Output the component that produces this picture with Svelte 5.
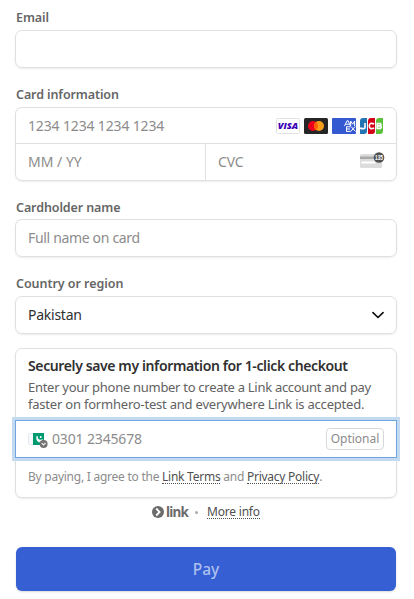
<script>
  const country = 'Pakistan';
</script>

<main>
  <section class="field">
    <div class="label"><span>Email</span></div>
    <div class="box"></div>
  </section>

  <section class="field card-field">
    <div class="label"><span>Card information</span></div>
    <div class="card">
      <div class="row number">
        <span class="ph digits">1234 1234 1234 1234</span>
        <div class="brands">
          <svg width="24" height="16" viewBox="0 0 24 16">
            <rect x=".5" y=".5" width="23" height="15" rx="1" fill="#fff" stroke="#e2e2e2" />
            <text x="1.7" y="11.3" textLength="20.5" lengthAdjust="spacingAndGlyphs" font-family="Open Sans, sans-serif" font-size="9.5" font-weight="800" font-style="italic" fill="#3a00b8">VISA</text>
          </svg>
          <svg width="24" height="16" viewBox="0 0 24 16">
            <rect width="24" height="16" rx="1.5" fill="#252525" />
            <circle cx="9" cy="8" r="5" fill="#eb001b" />
            <circle cx="15" cy="8" r="5" fill="#f79e1b" />
            <path d="M12 4a5 5 0 0 1 0 8a5 5 0 0 1 0-8z" fill="#ff5f00" />
          </svg>
          <svg width="24" height="16" viewBox="0 0 24 16">
            <rect width="24" height="16" rx="1" fill="#3559d1" />
            <g fill="none" stroke="#fff" stroke-width="1">
              <path d="M12.5 8 15 2.8h1.2L18.4 8M13.8 6.2h3.4M18.6 8V3l2 3.2L22.6 3v5M14.5 8.6v5M14.5 8.8h4M14.5 11h3.5M14.5 13.4h4.3l4.4-5M19 8.5l4.5 5" />
            </g>
          </svg>
          <svg width="24" height="16" viewBox="0 0 24 16">
            <path d="M3 0h4v13a3 3 0 0 1-3 3H0V3a3 3 0 0 1 3-3z" fill="#2374b3" />
            <path d="M11 0h4v13a3 3 0 0 1-3 3H8V3a3 3 0 0 1 3-3z" fill="#d50017" />
            <path d="M19 0h4v13a3 3 0 0 1-3 3h-4V3a3 3 0 0 1 3-3z" fill="#5bc13b" />
            <g fill="none" stroke="#fff" stroke-width="1.6">
              <path d="M5 5v4.2Q5 10.6 3 10.6T0 10M14.2 6Q9.3 4.2 9.3 8t4.9 2M16.5 5.6h3.8q1.5 1.1 0 2.3h-3.8 4q1.6 1.3 0 2.5h-4M17.2 5v5.8" />
            </g>
          </svg>
        </div>
      </div>
      <div class="row split">
        <div class="half expiry"><span class="ph mm">MM / YY</span></div>
        <div class="half cvc">
          <span class="ph">CVC</span>
          <svg class="cvc-icon" width="25" height="18" viewBox="0 0 25 18">
            <rect y="3" width="22" height="14" rx="1.5" fill="#dcdcdc" />
            <rect y="5.5" width="22" height="2.5" fill="#a9a9a9" />
            <rect x="1.5" y="10.5" width="14" height="2" fill="#fff" />
            <circle cx="19" cy="6.5" r="5.3" fill="#515151" />
            <text x="15" y="9" textLength="8" lengthAdjust="spacingAndGlyphs" font-family="Liberation Sans, sans-serif" font-size="6.8" font-weight="700" fill="#fff">135</text>
          </svg>
        </div>
      </div>
    </div>
  </section>

  <section class="field name-field">
    <div class="label"><span>Cardholder name</span></div>
    <div class="box"><span class="ph name">Full name on card</span></div>
  </section>

  <section class="field country-field">
    <div class="label"><span class="l4">Country or region</span></div>
    <div class="box select">
      <span class="value">{country}</span>
      <svg width="12" height="12" viewBox="0 0 12 12"><path d="M1 3.7 6 8.5l5-4.8" fill="none" stroke="#111" stroke-width="1.7" stroke-linecap="round" stroke-linejoin="round" /></svg>
    </div>
  </section>

  <section class="save">
    <div class="intro">
      <h2><span>Securely save my information for 1-click checkout</span></h2>
      <p><span class="p1">Enter your phone number to create a Link account and pay</span></p>
      <p><span class="p2">faster on formhero-test and everywhere Link is accepted.</span></p>
    </div>
    <div class="phone">
      <svg class="flag" width="20" height="17" viewBox="0 0 20 17">
        <rect x=".5" y="1.5" width="8" height="11" rx="1" fill="#f6f8fb" stroke="#e4e9f0" />
        <rect x="5" y="1" width="11" height="12" fill="#009a70" />
        <path d="M9.1 4.3C7.6 9.8 12 11.6 14.4 7.7C11.5 9.1 9.3 7.3 9.1 4.3z" fill="#fff" stroke="#fff" />
        <circle cx="12.7" cy="4.9" r="1" fill="#fff" />
        <circle cx="15.6" cy="12" r="4" fill="#737373" />
        <path d="m13.7 11.2 1.8 1.8 2-2" fill="none" stroke="#eee" stroke-width="1.2" />
      </svg>
      <span class="ph tel">0301 2345678</span>
      <span class="optional"><span>Optional</span></span>
    </div>
    <div class="terms"><span>By paying, I agree to the <a href="#terms">Link Terms</a> and <a href="#privacy">Privacy Policy</a>.</span></div>
  </section>

  <div class="link-row">
    <svg width="12" height="12" viewBox="0 0 12 12"><circle cx="6" cy="6" r="6" fill="#6b6b6b" /><path d="M4.2 2.5 7.6 6 4.2 9.5" fill="none" stroke="#fff" stroke-width="1.8" /></svg>
    <span class="brand">link</span>
    <i class="dot"></i>
    <a class="more" href="#info">More info</a>
  </div>

  <button>Pay</button>
</main>

<style>
  :global(body) { background: #fff; }
  main {
    box-sizing: border-box;
    width: 414px;
    height: 599px;
    padding: 8px 17px 0 15px;
    overflow: hidden;
    font-family: "Noto Sans", sans-serif;
    font-size: 14px;
    color: #303030;
    white-space: nowrap;
  }
  .label {
    height: 22px;
    padding-left: 1px;
    font-size: 12.5px;
    line-height: 20px;
    font-weight: 600;
    letter-spacing: -0.1px;
    color: #666;
  }
  .l4 { letter-spacing: -0.05px; }
  .box, .card, .save {
    box-sizing: border-box;
    width: 382px;
    border: 1px solid #e0e0e0;
    border-radius: 7px;
    box-shadow: 0 1px 2px rgba(0, 0, 0, 0.08);
  }
  .box {
    display: flex;
    align-items: center;
    height: 38px;
    padding: 0 12px;
  }
  .box span { margin-top: -1px; }
  .select { justify-content: space-between; }
  .card-field { margin-top: 17px; }
  .card { height: 74px; }
  .row {
    box-sizing: border-box;
    display: flex;
    align-items: center;
    height: 36px;
  }
  .number {
    justify-content: space-between;
    padding: 0 12px;
    border-bottom: 1px solid #e0e0e0;
  }
  .brands { display: flex; gap: 4px; }
  .brands svg, .cvc-icon, .select svg, .flag { display: block; }
  .cvc-icon { overflow: visible; }
  .half {
    box-sizing: border-box;
    display: flex;
    align-items: center;
    height: 37px;
    padding: 0 12px 1px;
  }
  .split { height: 36px; }
  .expiry { width: 190px; border-right: 1px solid #e0e0e0; }
  .cvc { flex: 1; justify-content: space-between; padding-right: 11px; }
  .cvc-icon { margin-bottom: 4px; }
  .ph { color: #8c8c8c; letter-spacing: -0.15px; }
  .half .ph { margin-top: -1px; }
  .mm { letter-spacing: 0; }
  .name { letter-spacing: -0.33px; }
  .value { letter-spacing: -0.25px; }
  .name-field { margin-top: 17px; }
  .country-field { margin-top: 17px; }
  .name-field .label { height: 21px; }
  .country-field .label { height: 22px; }
  .save { height: 150px; margin-top: 14px; }
  .intro { height: 71px; padding: 7px 12px 0; box-sizing: border-box; }
  h2 { margin: 0; font-size: 14px; line-height: 19px; font-weight: 600; letter-spacing: -0.38px; }
  p { margin: 0; font-size: 13px; line-height: 17px; color: #626262; }
  h2 + p { margin-top: 4px; }
  .p1 { letter-spacing: -0.29px; }
  .p2 { letter-spacing: -0.21px; }
  .phone {
    box-sizing: border-box;
    display: flex;
    align-items: center;
    height: 38px;
    margin: 0 -1px;
    padding: 0 12px;
    background: #fff;
    border: 1px solid #6ea6dd;
    box-shadow: 0 0 0 3px #c3daf0;
  }
  .flag { margin: 2px 4px 0 0; }
  .tel { margin-top: -2px; letter-spacing: -0.15px; }
  .optional {
    box-sizing: border-box;
    margin-left: auto;
    width: 58px;
    height: 22px;
    border: 1px solid #d8d8d8;
    border-radius: 4px;
    color: #8c8c8c;
    font-size: 12px;
    line-height: 19px;
    text-align: center;
  }
  .terms { padding: 10px 12px 0; font-size: 12px; line-height: 17px; color: #8c8c8c; letter-spacing: -0.25px; }
  a { color: #505050; text-decoration: none; border-bottom: 1px dotted #505050; }
  .terms a, .more { display: inline-block; line-height: 13px; }
  .link-row {
    display: flex;
    align-items: center;
    height: 20px;
    margin-top: 4px;
    padding-left: 137px;
  }
  .brand { margin-left: 2px; width: 22px; font-size: 13.5px; font-weight: 700; line-height: 18px; letter-spacing: -0.8px; color: #6b6b6b; }
  .dot { width: 3px; height: 3px; margin: 0 9px 0 7px; border-radius: 50%; background: #aaa; }
  .more { font-size: 12px; letter-spacing: -0.2px; }
  button {
    display: block;
    width: 380px;
    height: 44px;
    margin: 25px 0 0 1px;
    padding: 0;
    border: 0;
    border-radius: 6px;
    background: #355fd3;
    box-shadow: 0 1px 2px rgba(0, 0, 0, 0.15);
    color: #aebff0;
    font-family: inherit;
    font-size: 15.5px;
    font-weight: 500;
  }
</style>
